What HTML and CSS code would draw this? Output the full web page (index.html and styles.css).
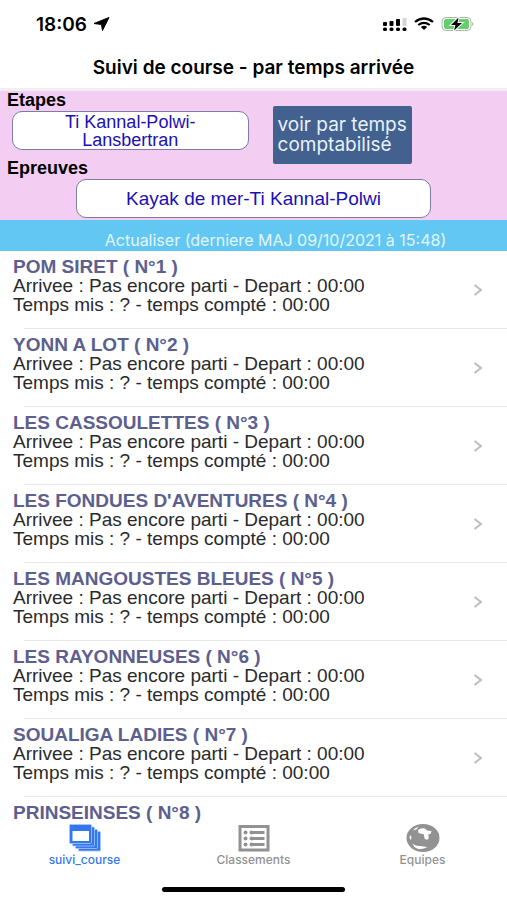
FILE: index.html
```html
<!DOCTYPE html>
<html lang="fr">
<head>
  <meta charset="UTF-8">
  <meta name="viewport" content="width=device-width, initial-scale=1.0">
  <title>Suivi de course</title>
  <link rel="stylesheet" href="styles.css">
</head>
<body>
  <div class="status-bar">
    <div class="clock">
      <span>18:06</span>
      <svg width="17" height="14" viewBox="0 0 17 14"><path d="M16 0.5 L9.5 13.5 L8.5 7.5 L1 6.5 Z" fill="#000" stroke="#000" stroke-linejoin="round"/></svg>
    </div>
    <div class="indicators">
      <svg width="24" height="15" viewBox="0 0 24 15">
        <g fill="#000">
          <rect x="0" y="5" width="4" height="4" rx="1"/>
          <rect x="6.5" y="4" width="4" height="5" rx="1"/>
          <rect x="13" y="2" width="4" height="7" rx="1"/>
          <rect x="0" y="10.5" width="4" height="3.5" rx="1.5"/>
          <rect x="6.5" y="10.5" width="4" height="3.5" rx="1.5"/>
          <rect x="13" y="10.5" width="4" height="3.5" rx="1.5"/>
          <rect x="19.5" y="10.5" width="4" height="3.5" rx="1.5"/>
        </g>
        <rect x="19.5" y="1" width="4" height="8" rx="1" fill="#d4d4d4"/>
      </svg>
      <svg width="20" height="14" viewBox="0 0 20 14">
        <g fill="none" stroke="#000" stroke-width="2.2">
          <path d="M1 5 Q10 -2 19 5"/>
          <path d="M4.3 8 Q10 3.6 15.7 8"/>
        </g>
        <path d="M6.8 10 Q10 7.6 13.2 10 L10 13 Z" fill="#000"/>
      </svg>
      <svg width="34" height="16" viewBox="0 0 34 16">
        <rect x="1" y="1.5" width="29" height="13" rx="4" fill="#fff" stroke="#a9b5a9"/>
        <rect x="3" y="3" width="25" height="10" rx="2" fill="#65cd6c"/>
        <path d="M31 6 Q33.5 8 31 10 Z" fill="#a9b5a9"/>
        <path d="M17.5 1.5 L10 9 L14.5 9 L13 14.5 L21 7 L16.5 7 Z" fill="#000" stroke="#fff" stroke-width="2" paint-order="stroke"/>
      </svg>
    </div>
  </div>

  <header class="title-bar">
    <h1>Suivi de course - par temps arrivée</h1>
  </header>

  <section class="filters">
    <div class="etape">
      <label for="etape">Etapes</label>
      <button class="choice" id="etape">Ti Kannal-Polwi-<br>Lansbertran</button>
    </div>
    <button class="mode">voir par temps<br>comptabilisé</button>
    <label for="epreuve">Epreuves</label>
    <button class="choice" id="epreuve">Kayak de mer-Ti Kannal-Polwi</button>
  </section>

  <button class="refresh">Actualiser (derniere MAJ 09/10/2021 à 15:48)</button>

  <ul class="teams" id="teams"></ul>

  <nav class="tabs">
    <a class="tab active" href="#suivi">
      <svg width="32" height="28" viewBox="0 0 32 28">
        <g fill="#3478f0" stroke="#a9c8fb" stroke-width="0.8">
          <rect x="9.500" y="7.500" width="22" height="19.500" rx="1"/>
          <rect x="6.500" y="5.500" width="22" height="19" rx="1"/>
          <rect x="3.500" y="3" width="22" height="19" rx="1"/>
          <rect x="0.500" y="0.500" width="22" height="19" rx="1"/>
        </g>
        <rect x="3.500" y="7" width="16.500" height="10" fill="#fff"/>
      </svg>
      <span>suivi_course</span>
    </a>
    <a class="tab" href="#classements">
      <svg width="32" height="28" viewBox="0 0 32 28">
        <rect x="2" y="2.500" width="28" height="23.500" fill="#fff" stroke="#929292" stroke-width="3"/>
        <g fill="#929292">
          <circle cx="7.500" cy="8.500" r="2"/><circle cx="7.500" cy="14.500" r="2"/><circle cx="7.500" cy="20.500" r="2"/>
          <circle cx="13.500" cy="8.500" r="2"/><circle cx="13.500" cy="14.500" r="2"/><circle cx="13.500" cy="20.500" r="2"/>
          <rect x="14" y="7" width="12.500" height="3"/>
          <rect x="14" y="13" width="12.500" height="3"/>
          <rect x="14" y="19" width="12.500" height="3"/>
        </g>
      </svg>
      <span>Classements</span>
    </a>
    <a class="tab" href="#equipes">
      <svg width="34" height="28" viewBox="0 0 34 28">
        <ellipse cx="17" cy="14" rx="16.500" ry="14" fill="#929292"/>
        <g fill="#fff">
          <path d="M12 6 Q15 3.500 19 4.500 L21 6.500 L25.500 7 L24.500 10 L22.500 10 L22.500 15 Q20 16.500 18.500 14.500 L18 10.500 L12.500 9 Z"/>
          <path d="M7 6.500 Q9 4 12.500 2.500 L10.500 5.500 Z"/>
          <path d="M6.500 19.500 Q10 22.500 14 22 L21.500 23 Q16 26 11 24.500 Q7.500 23 6.500 19.500 Z"/>
          <path d="M4 11 L5.500 13 L5 16 L3.500 14 Z"/>
        </g>
      </svg>
      <span>Equipes</span>
    </a>
  </nav>
  <div class="home-bar"></div>

  <script>
    const details = ['Arrivee : Pas encore parti - Depart : 00:00', 'Temps mis : ? - temps compté : 00:00'];

    const teams = [
      { name: 'POM SIRET', details },
      { name: 'YONN A LOT', details },
      { name: 'LES CASSOULETTES', details },
      { name: "LES FONDUES D'AVENTURES", details },
      { name: 'LES MANGOUSTES BLEUES', details },
      { name: 'LES RAYONNEUSES', details },
      { name: 'SOUALIGA LADIES', details },
      { name: 'PRINSEINSES', details: [] }
    ];

    const chevron = '<svg class="chevron" width="10" height="12" viewBox="0 0 10 12"><path d="M1.500 1 L8 6 L1.500 11" fill="none" stroke="#bdbdbd" stroke-width="2"/></svg>';

    // One row per team, numbered in order
    document.getElementById('teams').innerHTML = teams.map((team, i) => `
      <li>
        <a class="team" href="#equipe-${i + 1}">
          <div>
            <h2>${team.name} ( N°${i + 1} )</h2>
            ${team.details.map(line => `<p>${line}</p>`).join('')}
          </div>
          ${team.details.length ? chevron : ''}
        </a>
      </li>`).join('');
  </script>
</body>
</html>
```
FILE: styles.css
```css
* {
  box-sizing: border-box;
}
body {
  margin: 0;
  min-height: 100vh;
  display: flex;
  flex-direction: column;
  background-color: #fff;
  font-family: "Liberation Sans", Arial, sans-serif;
  color: #000;
}
h1, h2, p, ul {
  margin: 0;
  padding: 0;
}
button {
  font-family: inherit;
  cursor: pointer;
}
svg {
  display: block;
  flex: none;
}
.status-bar {
  display: flex;
  justify-content: space-between;
  align-items: center;
  height: 48px;
  padding: 0 32px 0 36px;
}
.clock {
  display: flex;
  align-items: center;
  gap: 6px;
  font: 600 19px Inter, sans-serif;
}
.indicators {
  display: flex;
  align-items: center;
  gap: 7px;
}
.title-bar {
  height: 43px;
  border-bottom: 3px solid #f1eff2;
  text-align: center;
}
.title-bar h1 {
  font: 600 19px/40px Inter, sans-serif;
}
.filters {
  display: grid;
  grid-template-columns: 49% 1fr;
  column-gap: 24px;
  background-color: #f3cef2;
  padding: 0 7px 2px;
}
.filters label {
  display: block;
  font-size: 18px;
  line-height: 18px;
  font-weight: bold;
}
.etape {
  padding-bottom: 9px;
}
.choice {
  height: 39px;
  border: 1px solid #7c7ca6;
  border-radius: 10px;
  background-color: #fff;
  color: #1c10b4;
  font-size: 18px;
  line-height: 18px;
  padding: 0;
}
.etape .choice {
  display: block;
  width: 98%;
  margin: 2px 0 0 auto;
}
.mode {
  grid-row: 1 / 3;
  grid-column: 2;
  align-self: start;
  justify-self: start;
  margin: 15px 0 0;
  border: none;
  border-radius: 2px;
  background-color: #42618f;
  color: #e9f1fb;
  font: 19px/20px Inter, sans-serif;
  text-align: left;
  padding: 9px 5px;
}
#epreuve {
  grid-column: 1 / 3;
  justify-self: center;
  width: 72%;
  margin: 2px 0 0;
  font-size: 19px;
}
.refresh {
  height: 31px;
  border: none;
  background-color: #63c7f3;
  color: #e2f6ff;
  font: 16px Inter, sans-serif;
  padding: 8px 0 0 44px;
}
.teams {
  flex: 1;
  list-style: none;
}
.teams li:not(:last-child)::after {
  content: "";
  display: block;
  height: 1px;
  margin-left: 24px;
  background-color: #e9e9e9;
}
.team {
  display: flex;
  justify-content: space-between;
  align-items: center;
  padding: 6px 24px 14px 13px;
  color: #2a2a2a;
  text-decoration: none;
}
.teams li:last-child .team {
  padding-bottom: 0;
}
.team h2,
.team p {
  font-size: 19px;
  line-height: 19px;
}
.team h2 {
  color: #5d608f;
}
.chevron {
  margin-top: 8px;
}
.tabs {
  display: flex;
}
.tab {
  flex: 1;
  display: flex;
  flex-direction: column;
  align-items: center;
  gap: 1px;
  color: #929292;
  font: 500 12px/14px Inter, sans-serif;
  text-decoration: none;
}
.tab.active {
  color: #3478f0;
}
.home-bar {
  width: 36%;
  height: 5px;
  margin: 20px auto 8px;
  border-radius: 3px;
  background-color: #000;
}
```
